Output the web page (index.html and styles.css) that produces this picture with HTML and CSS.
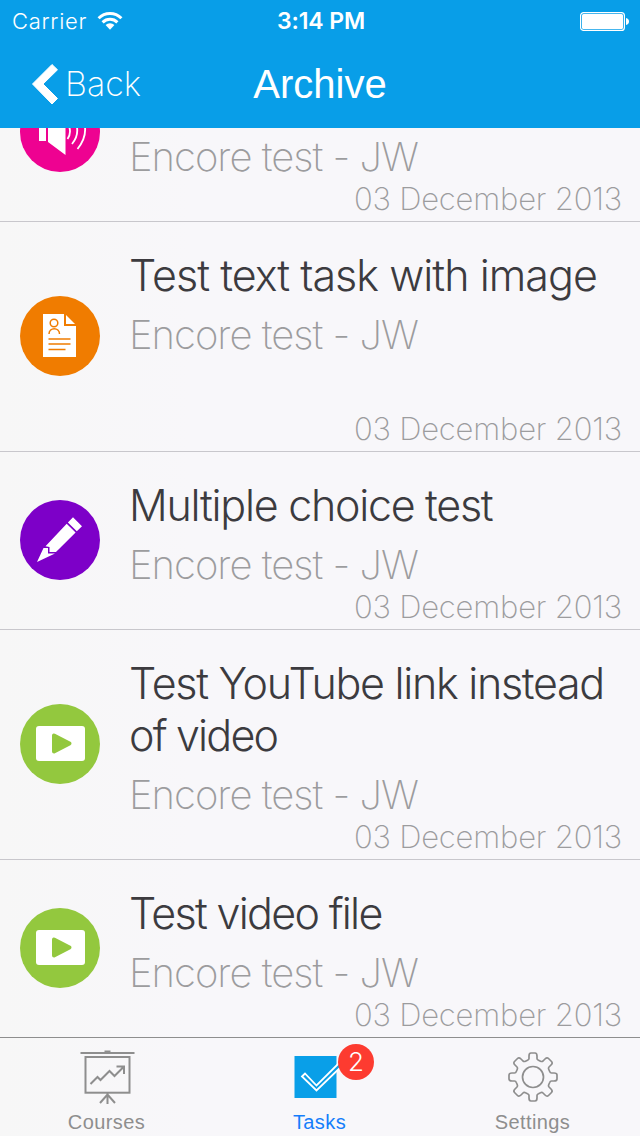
FILE: index.html
```html
<!DOCTYPE html>
<html lang="en">
<head>
<meta charset="utf-8">
<title>Archive</title>
<link rel="stylesheet" href="styles.css">
</head>
<body>
<div class="app">
  <header class="header">
    <div class="status">
      <div class="carrier"><span class="carrier-name">Carrier</span>
        <svg class="wifi" width="26" height="20" viewBox="0 0 26 20"><g fill="none" stroke="#fff" stroke-width="3"><path d="M1.6 7.2a16.2 16.2 0 0 1 22.8 0"/><path d="M5.6 11.4a10.5 10.5 0 0 1 14.8 0"/></g><path d="M8.6 14.1a6.2 6.2 0 0 1 8.8 0L13 18.7z" fill="#fff"/></svg>
      </div>
      <div class="clock">3:14 PM</div>
      <svg class="battery" width="50" height="20" viewBox="0 0 50 20"><rect x=".6" y=".6" width="43.8" height="17.8" rx="3" fill="none" stroke="#fff" stroke-width="1.2"/><rect x="2" y="2" width="41" height="15" rx="1.5" fill="#fff"/><path d="M46 6q3 .6 3 3.500t-3 3.500z" fill="#fff"/></svg>
    </div>
    <nav class="nav">
      <div class="back"><svg width="27" height="44" viewBox="0 0 27 44"><path d="M20 2.500 25.500 7.800 11 22 25.500 36.500 20 42 .5 22z" fill="#fff" stroke="#fff" stroke-linejoin="round"/></svg><span class="back-label">Back</span></div>
      <h1 class="title">Archive</h1>
    </nav>
  </header>

  <main class="list">
    <section class="row row-partial">
      <svg class="icon" viewBox="0 0 80 80"><circle cx="40" cy="40" r="40" fill="#ee0291"/><path d="M19 27h7v22h-7zM28 27 45.500 13v50L28 50z" fill="#fff"/><g fill="none" stroke="#fff" stroke-width="1.800"><path d="M47.500 31q5 9 0 16"/><path d="M53 25q9 15-1 27"/><path d="M59 20q13 19-1.500 37"/></g></svg>
      <div class="body"><p class="course">Encore test - JW</p><time class="date">03 December 2013</time></div>
    </section>
    <section class="row row-tall">
      <svg class="icon" viewBox="0 0 80 80"><circle cx="40" cy="40" r="40" fill="#f07c00"/><path d="M23 18h21v12h12v31H23z" fill="#fff"/><path d="M46 19v9h9z" fill="#fff"/><g fill="none" stroke="#f07c00" stroke-width="1.500"><circle cx="34" cy="27" r="3.800"/><path d="M29 38c0-7 10.500-7 10.500 0M28.500 43h22M28.500 48h22M28.500 53.500h17"/></g></svg>
      <div class="body"><h2 class="task">Test text task with image</h2><p class="course">Encore test - JW</p><time class="date">03 December 2013</time></div>
    </section>
    <section class="row">
      <svg class="icon" viewBox="0 0 80 80"><circle cx="40" cy="40" r="40" fill="#7d00c8"/><path d="M53 17.300 62 26.200 56.800 31.300 47.900 22.500zM46.700 23.700 55.600 32.500 36 52H29.500V47L25.500 46.300zM23.500 48H28V53.400H35L17 62z" fill="#fff"/></svg>
      <div class="body"><h2 class="task task-choice">Multiple choice test</h2><p class="course">Encore test - JW</p><time class="date">03 December 2013</time></div>
    </section>
    <section class="row row-tall">
      <svg class="icon" viewBox="0 0 80 80"><circle cx="40" cy="40" r="40" fill="#93c83e"/><rect x="16" y="22" width="49" height="35" rx="3" fill="#fff"/><path d="M34 31.500v16l15.500-8z" fill="#93c83e" stroke="#93c83e" stroke-width="4" stroke-linejoin="round"/></svg>
      <div class="body"><h2 class="task task-link">Test YouTube link instead<br><span class="task-second">of video</span></h2><p class="course">Encore test - JW</p><time class="date">03 December 2013</time></div>
    </section>
    <section class="row">
      <svg class="icon" viewBox="0 0 80 80"><circle cx="40" cy="40" r="40" fill="#93c83e"/><rect x="16" y="22" width="49" height="35" rx="3" fill="#fff"/><path d="M34 31.500v16l15.500-8z" fill="#93c83e" stroke="#93c83e" stroke-width="4" stroke-linejoin="round"/></svg>
      <div class="body"><h2 class="task task-video">Test video file</h2><p class="course">Encore test - JW</p><time class="date">03 December 2013</time></div>
    </section>
  </main>

  <footer class="tabs">
    <div class="tab">
      <svg class="tab-icon" width="60" height="60" viewBox="0 0 60 60" fill="none" stroke="#8e8e8e" stroke-width="2"><path d="M3.500 6h54" /><path d="M27.500 4.500h6"/><rect x="8.500" y="10" width="44" height="35.700"/><path d="m13.500 37 7-7 3 3 9-9 5 5 9.500-9.500M39.500 19.500H47V27"/><path d="M30.500 46v11M23 56l7.500-8.500L38 56"/></svg>
      <span class="tab-label">Courses</span>
    </div>
    <div class="tab tab-active">
      <svg class="tab-icon" width="60" height="60" viewBox="0 0 60 60"><path d="M4.500 9h42v42h-42z" fill="#099fe8"/><path d="M12 29.500 15 26.500 26.500 38.500 51 14 54 17 26.500 43.500z" fill="#099fe8" stroke="#fff" stroke-width="1.800"/></svg>
      <span class="badge">2</span>
      <span class="tab-label">Tasks</span>
    </div>
    <div class="tab">
      <svg class="tab-icon" width="60" height="60" viewBox="0 0 60 60" fill="none" stroke="#8e8e8e" stroke-width="1.700"><g transform="translate(0 1)"><circle cx="30" cy="29" r="10.500"/><path stroke-linejoin="round" d="M26 8Q26 5 28 5H32Q34 5 34 8V10.500Q34 11.800 35.500 12.300L37.500 13.200Q39 13.900 40 13L42 11Q44 9 45.500 10.500L48.500 13.500Q50 15 48 17L46 19Q45 20 45.800 21.500L46.700 23.500Q47.200 25 48.500 25H51Q54 25 54 27V31Q54 33 51 33H48.500Q47.200 33 46.700 34.500L45.800 36.500Q45 38 46 39L48 41Q50 43 48.500 44.500L45.500 47.500Q44 49 42 47L40 45Q39 44 37.500 44.800L35.500 45.700Q34 46.200 34 47.500V50Q34 53 32 53H28Q26 53 26 50V47.500Q26 46.200 24.500 45.700L22.500 44.800Q21 44 20 45L18 47Q16 49 14.500 47.500L11.500 44.500Q10 43 12 41L14 39Q15 38 14.200 36.500L13.300 34.500Q12.800 33 11.500 33H9Q6 33 6 31V27Q6 25 9 25H11.500Q12.800 25 13.300 23.500L14.200 21.500Q15 20 14 19L12 17Q10 15 11.500 13.500L14.500 10.500Q16 9 18 11L20 13Q21 13.900 22.500 13.200L24.500 12.300Q26 11.800 26 10.500Z"/></g></svg>
      <span class="tab-label">Settings</span>
    </div>
  </footer>
</div>
</body>
</html>
```
FILE: styles.css
```css
* { box-sizing: border-box; }
body, h1, h2, p { margin: 0; font-weight: 300; }
body { font-family: Inter, "Liberation Sans", sans-serif; }
.app { width: 640px; height: 1136px; display: flex; flex-direction: column; overflow: hidden; background: linear-gradient(90deg, #f7f7f7, #f8f7fa 30%); white-space: nowrap; }
.header { flex: none; height: 128px; background: #089ee8; color: #fff; }
.status { height: 40px; padding: 0 10px 0 12px; display: grid; grid-template-columns: 1fr auto 1fr; align-items: center; }
.carrier { display: flex; align-items: center; gap: 10px; font-size: 22px; line-height: 40px; }
.carrier-name { letter-spacing: 0.7px; }
.wifi { margin-top: 1px; }
.clock { font-size: 23px; font-weight: 600; line-height: 40px; letter-spacing: -0.1px; padding-top: 1px; }
.battery { justify-self: end; margin-top: 2px; }
.nav { height: 88px; padding: 0 32px; display: grid; grid-template-columns: 1fr auto 1fr; align-items: center; }
.back { display: flex; align-items: center; gap: 6px; font-size: 34px; line-height: 44px; padding-bottom: 1px; }
.back-label { font-weight: 250; letter-spacing: 0; }
.title { font-family: "Liberation Sans", Arial, sans-serif; font-size: 40px; font-weight: 400; line-height: 88px; }
.list { flex: none; height: 909px; overflow: hidden; }
.row { height: 178px; padding: 27px 18px 4px 20px; display: flex; gap: 29px; border-bottom: 1px solid #c8c7cc; }
.row-tall { height: 230px; }
.row-partial { height: 94px; padding-top: 0; }
.icon { flex: none; align-self: center; width: 80px; height: 80px; margin-top: -24px; }
.row-partial .icon { align-self: flex-start; margin-top: -36px; }
.body { flex: 1; display: flex; flex-direction: column; }
.task { font-size: 43px; line-height: 52px; color: #3c3b3f; letter-spacing: -0.96px; }
.task-choice { letter-spacing: -1.28px; }
.task-link { letter-spacing: -1.3px; }
.task-second { letter-spacing: -1.8px; }
.task-video { letter-spacing: -1.7px; }
.course { margin-top: 10px; font-size: 40px; line-height: 48px; font-weight: 250; color: #9c9c9e; letter-spacing: -1px; }
.row-partial .course { margin-top: 5px; }
.date { margin-top: auto; align-self: flex-end; font-size: 31px; line-height: 36px; font-weight: 250; color: #9c9c9e; letter-spacing: -0.2px; }
.tabs { flex: 1; border-top: 1px solid #8e8e8e; display: grid; grid-template-columns: repeat(3, 213px); }
.tab { position: relative; display: flex; flex-direction: column; align-items: center; padding-top: 9px; color: #8e8e8e; }
.tab-active { color: #157efb; }
.tab-label { font-family: "Liberation Sans", Arial, sans-serif; font-size: 20px; line-height: 24px; margin-top: 3px; letter-spacing: 0.4px; }
.badge { position: absolute; left: 125px; top: 6px; width: 36px; height: 36px; border-radius: 50%; background: #fd3b30; color: #fff; font-size: 26px; line-height: 36px; text-align: center; font-weight: 300; }
```
